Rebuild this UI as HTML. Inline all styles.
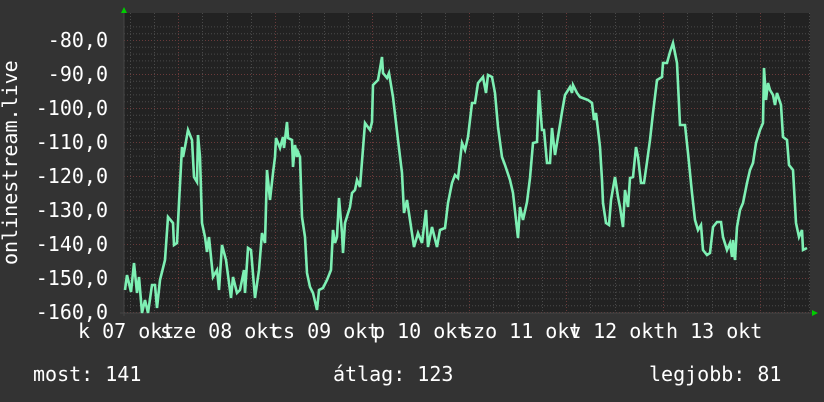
<!DOCTYPE html>
<html><head><meta charset="utf-8"><style>
html,body{margin:0;padding:0;background:#333;}
body{width:824px;height:402px;position:relative;overflow:hidden;font-family:"DejaVu Sans Mono","Liberation Mono",monospace;color:#fff;}
.t{position:absolute;font-size:20px;line-height:20px;white-space:pre;}
.yl{position:absolute;right:716px;font-size:20px;line-height:20px;}
</style></head><body>
<svg id="g" width="824" height="402" style="position:absolute;left:0;top:0">
<rect x="124" y="13" width="686" height="300" fill="#222"/>
<g id="grid"></g>
<line x1="124" y1="10" x2="124" y2="316" stroke="#444" stroke-width="1"/>
<line x1="120" y1="313" x2="812" y2="313" stroke="#444" stroke-width="1"/>
<polygon points="121,13 127,13 124,7" fill="#0c0"/>
<polygon points="812,310 812,316 818,313" fill="#0c0"/>
<polyline id="ln" fill="none" stroke="#7ef0b4" stroke-width="2.6" stroke-linejoin="miter" points="125,290 127,275 131,292 134,263 137,293 139,277 142,313 145,300 148,313 152,285 155,285 157,308 160,280 165,260 168,217 173,223 174,245 177,243 179,203 182,147 183,157 185,147 188,130 192,140 194,177 197,182 198,135 200,157 202,223 205,237 207,252 209,237 213,277 217,270 219,290 222,245 226,260 231,298 233,277 237,293 240,290 244,270 245,293 248,248 251,250 255,298 259,270 262,233 265,243 267,170 270,200 273,173 275,157 276,138 280,148 283,137 284,148 287,122 288,138 292,140 293,167 295,145 297,157 298,152 300,157 302,217 305,237 307,273 310,287 313,293 317,310 319,290 323,288 327,280 331,270 333,230 335,243 337,237 339,198 342,233 343,253 345,223 350,207 352,193 355,190 357,180 360,187 365,123 370,130 372,122 373,85 378,80 382,57 383,73 387,78 389,73 393,97 398,140 402,173 404,213 407,200 410,220 414,247 418,233 422,243 426,210 428,247 432,227 437,247 440,230 445,228 448,203 452,183 455,175 458,178 462,143 465,150 468,137 472,103 475,103 478,83 483,77 486,93 488,75 492,77 495,93 498,127 502,157 505,165 510,180 513,193 518,238 520,207 523,220 527,202 530,178 533,143 537,142 539,90 542,130 544,130 547,163 550,163 552,128 555,155 558,137 562,112 565,95 570,87 572,93 573,85 577,93 580,97 588,100 592,103 594,120 596,113 598,130 600,147 602,180 603,203 606,223 609,225 611,200 615,177 618,197 620,207 623,227 625,190 628,207 630,178 633,177 636,147 638,157 641,183 644,183 647,162 650,140 653,113 657,80 662,77 663,63 667,63 670,52 673,43 677,63 680,125 685,125 688,153 692,193 695,220 698,230 701,225 703,250 707,255 710,253 713,227 717,222 721,222 723,237 727,250 730,243 732,257 733,240 735,260 737,227 740,210 743,203 747,183 750,170 753,163 756,143 760,130 763,123 764,68 766,100 768,83 770,90 773,95 775,105 777,93 781,105 783,137 787,140 789,165 793,170 796,223 799,237 802,230 803,250 807,248"/>
</svg>
<script>
(function(){
var g=document.getElementById('grid'),s='';
for(var i=0;i<=42;i++){var y=312-i*6.8;if(y<13)break;var maj=(i%5==0);
s+='<line x1="124" x2="810" y1="'+(y+0.5)+'" y2="'+(y+0.5)+'" stroke="'+(maj?'#6a3a3a':'#4a4a4a')+'" stroke-dasharray="1,2"/>';}
for(var k=-3;k<30;k++){var x=178+k*24.25;if(x<126||x>809)continue;var maj=(k%4==0);
s+='<line y1="13" y2="313" x1="'+(Math.round(x)+0.5)+'" x2="'+(Math.round(x)+0.5)+'" stroke="'+(maj?'#6a3a3a':'#4a4a4a')+'" stroke-dasharray="1,2"/>';}
g.innerHTML=s;
})();
</script>
<div class="yl" style="top:30px">-80,0</div>
<div class="yl" style="top:64px">-90,0</div>
<div class="yl" style="top:98px">-100,0</div>
<div class="yl" style="top:132px">-110,0</div>
<div class="yl" style="top:166px">-120,0</div>
<div class="yl" style="top:200px">-130,0</div>
<div class="yl" style="top:234px">-140,0</div>
<div class="yl" style="top:268px">-150,0</div>
<div class="yl" style="top:302px">-160,0</div>
<div class="t" style="left:-90px;top:155px;width:200px;text-align:center;transform:rotate(-90deg);">onlinestream.live</div>
<div class="t" style="left:78px;top:321px">k 07 okt</div>
<div class="t" style="left:160px;top:321px">sze 08 okt</div>
<div class="t" style="left:271px;top:321px">cs 09 okt</div>
<div class="t" style="left:373px;top:321px">p 10 okt</div>
<div class="t" style="left:461px;top:321px">szo 11 okt</div>
<div class="t" style="left:569px;top:321px">v 12 okt</div>
<div class="t" style="left:666px;top:321px">h 13 okt</div>
<div class="t" style="left:33px;top:364px">most: 141</div>
<div class="t" style="left:333px;top:364px">átlag: 123</div>
<div class="t" style="left:649px;top:364px">legjobb: 81</div>
</body></html>
